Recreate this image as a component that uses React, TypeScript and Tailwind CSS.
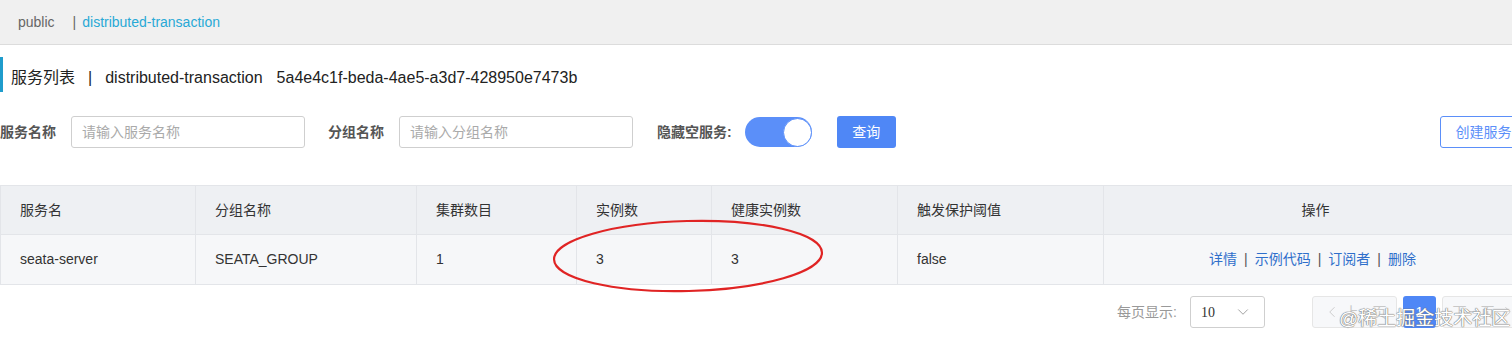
import { ChevronDown, ChevronLeft, ChevronRight } from "lucide-react";

const cols = [
  { title: "服务名", w: "w-[195px]" },
  { title: "分组名称", w: "w-[221px]" },
  { title: "集群数目", w: "w-[160px]" },
  { title: "实例数", w: "w-[135px]" },
  { title: "健康实例数", w: "w-[186px]" },
  { title: "触发保护阈值", w: "w-[206px]" },
];

const row = ["seata-server", "SEATA_GROUP", "1", "3", "3", "false"];

function Toggle() {
  return (
    <div className="w-[67px] h-[30px] rounded-full bg-[#5b8ff9] flex items-center justify-end">
      <div className="w-[29px] h-[29px] rounded-full bg-white border border-[#5b8ff9]" />
    </div>
  );
}

export default function App() {
  return (
    <div className="w-[1512px] h-[342px] overflow-hidden bg-white font-['Liberation_Sans','Noto_Sans_CJK_SC',sans-serif] text-[#333]">
      <div className="w-[1527px] relative">
        {/* breadcrumb */}
        <div className="h-[45px] bg-[#f0f0f0] border-b border-[#dcdcdc] flex items-center pl-[18px] text-[14px]">
          <span className="text-[#666]">public</span>
          <span className="ml-[18px] text-[#666]">|</span>
          <span className="ml-[6px] text-[#28a9d6]">distributed-transaction</span>
        </div>

        {/* title */}
        <div className="mt-[12px] h-[35px] border-l-[3px] border-[#1f9ccc] flex items-center pt-[7px] pl-[8px] text-[16px] text-[#222]">
          <span>服务列表</span>
          <span className="ml-[13px]">|</span>
          <span className="ml-[13px]">distributed-transaction</span>
          <span className="ml-[14px]">5a4e4c1f-beda-4ae5-a3d7-428950e7473b</span>
        </div>

        {/* filters */}
        <div className="mt-[24px] h-[32px] flex items-center text-[14px]">
          <span className="font-bold text-[#555]">服务名称</span>
          <div className="ml-[15px] w-[234px] h-[32px] border border-[#cfcfcf] rounded-[3px] flex items-center pl-[10px] text-[#aaa]">
            请输入服务名称
          </div>
          <span className="ml-[23px] font-bold text-[#555]">分组名称</span>
          <div className="ml-[15px] w-[234px] h-[32px] border border-[#cfcfcf] rounded-[3px] flex items-center pl-[10px] text-[#aaa]">
            请输入分组名称
          </div>
          <span className="ml-[24px] font-bold text-[#555]">隐藏空服务:</span>
          <div className="ml-[13px]">
            <Toggle />
          </div>
          <button className="ml-[25px] w-[59px] h-[32px] rounded-[3px] bg-[#4f87f6] text-white text-[14px]">
            查询
          </button>
          <button className="ml-auto w-[87px] h-[32px] rounded-[3px] border border-[#5b8ff9] text-[#5b8ff9] text-[14px] bg-white">
            创建服务
          </button>
        </div>

        {/* table */}
        <div className="mt-[37px] border-t border-l border-[#e3e5e9] text-[14px]">
          <div className="flex h-[49px] bg-[#eef0f3] border-b border-[#e3e5e9]">
            {cols.map((c) => (
              <div key={c.title} className={`${c.w} shrink-0 flex items-center pl-[19px] border-r border-[#e3e5e9]`}>
                {c.title}
              </div>
            ))}
            <div className="flex-1 flex items-center justify-center">操作</div>
          </div>
          <div className="flex h-[50px] bg-[#f6f7f9] border-b border-[#e3e5e9]">
            {cols.map((c, i) => (
              <div key={c.title} className={`${c.w} shrink-0 flex items-center pl-[19px] border-r border-[#e3e5e9]`}>
                {row[i]}
              </div>
            ))}
            <div className="flex-1 flex items-center justify-center gap-[7px] pr-[6px] text-[#2f6fcb]">
              <span>详情</span>
              <span className="text-[#555]">|</span>
              <span>示例代码</span>
              <span className="text-[#555]">|</span>
              <span>订阅者</span>
              <span className="text-[#555]">|</span>
              <span>删除</span>
            </div>
          </div>
        </div>

        {/* pagination */}
        <div className="mt-[11px] flex items-center justify-end text-[14px]">
          <span className="text-[#999]">每页显示:</span>
          <div className="ml-[13px] w-[75px] h-[32px] border border-[#cfcfcf] rounded-[3px] flex items-center justify-between pl-[10px] pr-[12px]">
            <span className="text-[#333] font-['Liberation_Serif',serif]">10</span>
            <ChevronDown size={18} strokeWidth={1.2} className="text-[#999]" />
          </div>
          <div className="ml-[47px] w-[85px] h-[32px] border border-[#e6e6e6] rounded-[3px] bg-[#f7f8fa] flex items-center justify-center text-[#c8c8c8]">
            <ChevronLeft size={18} strokeWidth={1.2} />
            <span className="ml-[4px]">上一页</span>
          </div>
          <div className="ml-[6px] w-[33px] h-[32px] rounded-[3px] bg-[#4f87f6] text-white flex items-center justify-center">
            1
          </div>
          <div className="ml-[6px] w-[85px] h-[32px] border border-[#e6e6e6] rounded-[3px] bg-[#f7f8fa] flex items-center justify-center text-[#c8c8c8]">
            <span className="mr-[4px]">下一页</span>
            <ChevronRight size={18} strokeWidth={1.2} />
          </div>
        </div>

        {/* red annotation ellipse */}
        <svg className="absolute left-[551px] top-[218px]" width="274" height="76" viewBox="0 0 274 76">
          <ellipse cx="137" cy="38" rx="134" ry="35" fill="none" stroke="#e02424" strokeWidth="2.2" transform="rotate(-1.5 137 38)" />
        </svg>

        {/* watermark */}
        <div className="absolute left-[1339px] top-[305px] text-[19px] text-white [text-shadow:0_0_1px_#777,0_0_1px_#777,0_0_1px_#777]">
          @稀土掘金技术社区
        </div>
      </div>
    </div>
  );
}
